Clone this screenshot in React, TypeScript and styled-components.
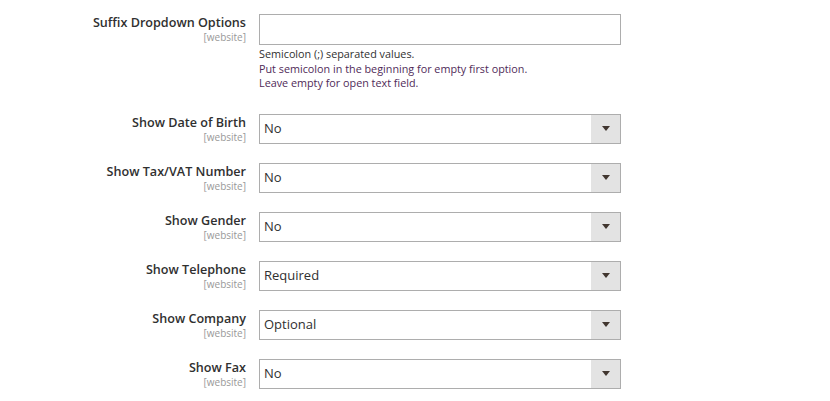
import React from 'react';
import styled, {createGlobalStyle} from 'styled-components';

const GlobalStyle = createGlobalStyle`
  body {
    margin: 0;
    background: #ffffff;
    font-family: "Open Sans", "Liberation Sans", sans-serif;
    color: #303030;
  }
`;

interface Field {
    label: string;
    value?: string;
    notes?: string[];
}

const fields: Field[] = [
    {
        label: 'Suffix Dropdown Options',
        notes: [
            'Semicolon (;) separated values.',
            'Put semicolon in the beginning for empty first option.',
            'Leave empty for open text field.',
        ],
    },
    {label: 'Show Date of Birth', value: 'No'},
    {label: 'Show Tax/VAT Number', value: 'No'},
    {label: 'Show Gender', value: 'No'},
    {label: 'Show Telephone', value: 'Required'},
    {label: 'Show Company', value: 'Optional'},
    {label: 'Show Fax', value: 'No'},
];

const Form = styled.div`
  display: flex;
  flex-direction: column;
  gap: 19px;
  padding-top: 14px;
`;

const Row = styled.div`
  display: grid;
  grid-template-columns: 246px 362px;
  column-gap: 13px;
  align-items: start;
`;

const Label = styled.div`
  display: flex;
  flex-direction: column;
  align-items: flex-end;
  text-align: right;
`;

const Title = styled.span`
  font-size: 12.6px;
  font-weight: 600;
  line-height: 17px;
  color: #303030;
`;

const Scope = styled.span`
  font-size: 10px;
  line-height: 12px;
  color: #999999;
`;

const Control = styled.div`
  display: flex;
  flex-direction: column;
`;

const TextInput = styled.div`
  height: 31px;
  box-sizing: border-box;
  border: 1px solid #adadad;
  background: #ffffff;
`;

const Select = styled.div`
  height: 30px;
  box-sizing: border-box;
  border: 1px solid #adadad;
  background: #ffffff;
  display: flex;
  align-items: center;
`;

const SelectValue = styled.span`
  flex: 1;
  padding: 0 0 2px 4px;
  font-size: 13px;
  color: #303030;
`;

const Arrow = styled.span`
  width: 29px;
  height: 100%;
  background: #e3e3e3;
  display: flex;
  align-items: center;
  justify-content: center;

  &::after {
    content: '';
    border-left: 4px solid transparent;
    border-right: 4px solid transparent;
    border-top: 5px solid #41362f;
  }
`;

const Notes = styled.div`
  margin-top: 2px;
  padding-bottom: 4px;
  font-size: 10.8px;
  line-height: 14.5px;
`;

const NoteLine = styled.div<{ $first?: boolean }>`
  color: ${p => (p.$first ? '#303030' : '#4f2a58')};
`;

const App = () => (
    <>
        <GlobalStyle/>
        <Form>
            {fields.map(f => (
                <Row key={f.label}>
                    <Label>
                        <Title>{f.label}</Title>
                        <Scope>[website]</Scope>
                    </Label>
                    <Control>
                        {f.value ? (
                            <Select>
                                <SelectValue>{f.value}</SelectValue>
                                <Arrow/>
                            </Select>
                        ) : (
                            <TextInput/>
                        )}
                        {f.notes && (
                            <Notes>
                                {f.notes.map((n, i) => (
                                    <NoteLine key={n} $first={i === 0}>{n}</NoteLine>
                                ))}
                            </Notes>
                        )}
                    </Control>
                </Row>
            ))}
        </Form>
    </>
);

export default App;
